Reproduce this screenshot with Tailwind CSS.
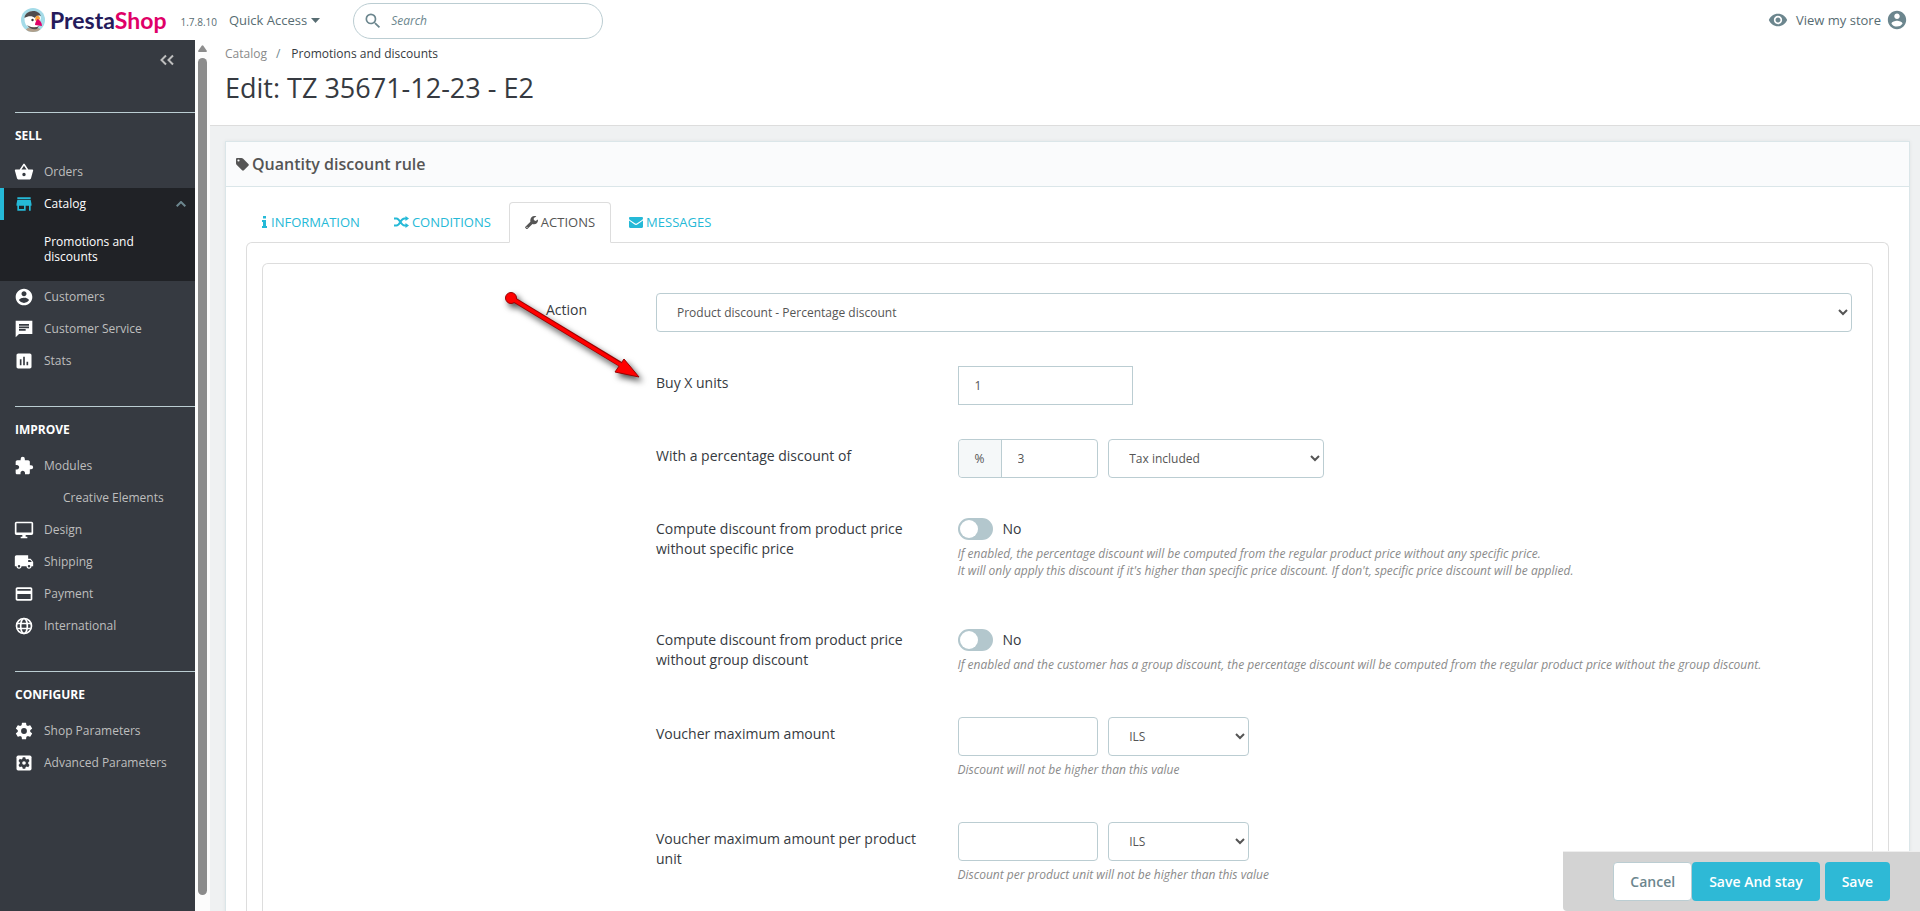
<!DOCTYPE html>
<html lang="en">
<head>
<meta charset="utf-8">
<meta name="viewport" content="width=device-width, initial-scale=1">
<title>Promotions and discounts • PrestaShop</title>
<script src="https://cdn.jsdelivr.net/npm/@tailwindcss/browser@4"></script>
</head>
<body class="flex h-screen flex-col overflow-hidden bg-[#eff1f2] font-['Open_Sans',sans-serif] text-sm text-[#363a41]">

<header class="flex h-10 shrink-0 items-center bg-white pr-3">
  <a href="#" class="ml-5 flex items-center gap-1" aria-label="PrestaShop">
    <svg class="size-[26px]" viewBox="0 0 26 26" aria-hidden="true">
      <defs><clipPath id="badge"><circle cx="13" cy="13" r="12"/></clipPath></defs>
      <g clip-path="url(#badge)">
        <rect width="26" height="26" fill="#a4dbe8"/>
        <path d="M5 26c0-4 3-6 8-6s9 2 9 6z" fill="#b1a08c"/>
        <path d="M4.500 12c0-5 4-8 8.500-8 4 0 7 3 8 7l-3 9H9c-3-1-4.500-4-4.500-8z" fill="#fff"/>
        <path d="M4.500 11c0-4 4-7 8.500-7 4 0 7 2 8 5-3-1-5 0-6 2-3-2.500-7-2-10.500 0z" fill="#4f4c4d"/>
        <path d="M7 18c4 3 9 3 12 1l-2 3c-4 1-7 0-10-4z" fill="#4f4c4d"/>
        <circle cx="12.500" cy="13" r="1.200" fill="#333"/>
        <path d="M16 9c2-1 4 0 4 3l-3 3-2-2z" fill="#f9a13a"/>
        <path d="M17.500 12c2.500 1 4.500 4 4.500 7l-7-1c0-2 1-4 2.500-6z" fill="#df0067"/>
      </g>
    </svg>
    <span class="font-['Lato',sans-serif] text-[23px] leading-6 font-bold text-[#251b5b]">Presta<span class="text-[#df0067]">Shop</span></span>
  </a>
  <span class="ml-[14px] mt-1 text-[10px] text-[#576c72]">1.7.8.10</span>
  <button type="button" class="ml-3 flex items-center gap-1 text-[13px] text-[#576c72]">Quick Access
    <svg class="h-[5px] w-[9px]" viewBox="0 0 9 5" fill="currentColor"><path d="M0 0h9L4.500 5z"/></svg>
  </button>
  <form class="ml-[33px] mt-[2px] flex h-9 w-[250px] items-center gap-2 rounded-full border border-[#bbcdd2] pl-[9px]" role="search">
    <svg class="size-5 fill-[#6c868e]" viewBox="0 0 24 24"><path d="M15.500 14h-.79l-.28-.27A6.470 6.470 0 0 0 16 9.500 6.500 6.500 0 1 0 9.500 16c1.610 0 3.090-.59 4.230-1.570l.27.28v.79l5 4.990L20.490 19l-4.990-5zm-6 0C7.010 14 5 11.990 5 9.500S7.010 5 9.500 5 14 7.010 14 9.500 11.990 14 9.500 14z"/></svg>
    <input type="text" aria-label="Search" placeholder="Search" class="w-40 text-xs italic outline-none placeholder:text-[#6c868e]">
  </form>
  <a href="#" class="ml-auto flex items-center gap-2 text-[13px] text-[#576c72]">
    <svg class="size-5 fill-[#6c868e]" viewBox="0 0 24 24"><path d="M12 4.500C7 4.500 2.730 7.610 1 12c1.730 4.390 6 7.500 11 7.500s9.270-3.110 11-7.500c-1.730-4.390-6-7.500-11-7.500zM12 17c-2.760 0-5-2.240-5-5s2.240-5 5-5 5 2.240 5 5-2.240 5-5 5zm0-8c-1.660 0-3 1.340-3 3s1.340 3 3 3 3-1.340 3-3-1.340-3-3-3z"/></svg>
    View my store</a>
  <button type="button" class="ml-[5px]" aria-label="Account"><svg class="size-[22px] fill-[#6c868e]" viewBox="0 0 24 24"><path d="M12 2C6.480 2 2 6.480 2 12s4.480 10 10 10 10-4.480 10-10S17.520 2 12 2zm0 3c1.660 0 3 1.340 3 3s-1.340 3-3 3-3-1.340-3-3 1.340-3 3-3zm0 14.200a7.200 7.200 0 0 1-6-3.220c.03-1.990 4-3.080 6-3.080 1.990 0 5.970 1.090 6 3.080a7.200 7.200 0 0 1-6 3.220z"/></svg></button>
</header>

<div class="flex min-h-0 flex-1">
  <nav class="w-[195px] shrink-0 overflow-hidden bg-[#363a41] text-xs text-[#bebebe]" aria-label="Main menu">
    <div class="flex h-[72px] justify-end pt-2 pr-4">
      <button type="button" class="size-6" aria-label="Collapse menu"><svg class="size-6 fill-none stroke-[#bebebe] stroke-2" viewBox="0 0 24 24"><path d="M11 7.500 6.500 12l4.500 4.500M18 7.500 13.500 12l4.500 4.500"/></svg></button>
    </div>

    <section class="pb-[29px]">
      <h2 class="ml-[15px] border-t border-[#bbcdd2] pt-[15px] pb-3 leading-4 font-bold text-white">SELL</h2>
      <a href="#" class="flex h-8 items-center gap-[10px] pl-[14px]"><svg class="size-5 fill-white" viewBox="0 0 24 24"><path d="m17.210 9-4.380-6.560a1 1 0 0 0-1.660.01L6.790 9H2c-.55 0-1 .45-1 1 0 .09.010.18.040.27l2.540 9.270c.23.840 1 1.460 1.920 1.460h13c.92 0 1.690-.62 1.930-1.460l2.540-9.270L23 10c0-.55-.45-1-1-1h-4.790zM9 9l3-4.400L15 9H9zm3 8c-1.100 0-2-.9-2-2s.9-2 2-2 2 .9 2 2-.9 2-2 2z"/></svg>Orders</a>
      <div class="bg-[#202226] text-white">
        <a href="#" class="flex h-8 items-center gap-[10px] border-l-4 border-[#25b9d7] pr-[9px] pl-[10px]"><svg class="size-5 fill-[#25b9d7]" viewBox="0 0 24 24"><path d="M20 4H4v2h16V4zm1 10v-2l-1-5H4l-1 5v2h1v6h10v-6h4v6h2v-6h1zm-9 4H6v-4h6v4z"/></svg>Catalog
          <svg class="ml-auto h-[6px] w-[10px] fill-none stroke-[#6c868e] stroke-2" viewBox="0 0 10 6"><path d="M0.700 5.300 5 1l4.300 4.300"/></svg></a>
        <a href="#" class="block pt-[14px] pr-10 pb-[17px] pl-11 leading-[15px]">Promotions and discounts</a>
      </div>
      <a href="#" class="flex h-8 items-center gap-[10px] pl-[14px]"><svg class="size-5 fill-white" viewBox="0 0 24 24"><path d="M12 2C6.480 2 2 6.480 2 12s4.480 10 10 10 10-4.480 10-10S17.520 2 12 2zm0 3c1.660 0 3 1.340 3 3s-1.340 3-3 3-3-1.340-3-3 1.340-3 3-3zm0 14.200a7.200 7.200 0 0 1-6-3.220c.03-1.990 4-3.080 6-3.080 1.990 0 5.970 1.090 6 3.080a7.200 7.200 0 0 1-6 3.220z"/></svg>Customers</a>
      <a href="#" class="flex h-8 items-center gap-[10px] pl-[14px]"><svg class="size-5 fill-white" viewBox="0 0 24 24"><path d="M22 2H2.010L2 22l4-4h16V2zM6 9h12v2H6V9zm8 5H6v-2h8v2zm4-6H6V6h12v2z"/></svg>Customer Service</a>
      <a href="#" class="flex h-8 items-center gap-[10px] pl-[14px]"><svg class="size-5 fill-white" viewBox="0 0 24 24"><path d="M19 3H5c-1.100 0-2 .9-2 2v14c0 1.100.9 2 2 2h14c1.100 0 2-.9 2-2V5c0-1.100-.9-2-2-2zM9 17H7v-7h2v7zm4 0h-2V7h2v10zm4 0h-2v-4h2v4z"/></svg>Stats</a>
    </section>

    <section class="pb-[29px]">
      <h2 class="ml-[15px] border-t border-[#bbcdd2] pt-[15px] pb-3 leading-4 font-bold text-white">IMPROVE</h2>
      <a href="#" class="flex h-8 items-center gap-[10px] pl-[14px]"><svg class="size-5 fill-white" viewBox="0 0 24 24"><path d="M20.500 11H19V7c0-1.100-.9-2-2-2h-4V3.500a2.500 2.500 0 0 0-5 0V5H4c-1.100 0-1.990.9-1.990 2v3.800H3.500c1.490 0 2.700 1.210 2.700 2.700s-1.210 2.700-2.700 2.700H2V20c0 1.100.9 2 2 2h3.800v-1.500c0-1.490 1.210-2.700 2.700-2.700s2.700 1.210 2.700 2.700V22H17c1.100 0 2-.9 2-2v-4h1.500a2.500 2.500 0 0 0 0-5z"/></svg>Modules</a>
      <a href="#" class="flex h-8 items-center pl-[63px]">Creative Elements</a>
      <a href="#" class="flex h-8 items-center gap-[10px] pl-[14px]"><svg class="size-5 fill-white" viewBox="0 0 24 24"><path d="M21 2H3c-1.100 0-2 .9-2 2v12c0 1.100.9 2 2 2h7v2H8v2h8v-2h-2v-2h7c1.100 0 2-.9 2-2V4c0-1.100-.9-2-2-2zm0 13H3V4h18v11z"/></svg>Design</a>
      <a href="#" class="flex h-8 items-center gap-[10px] pl-[14px]"><svg class="size-5 fill-white" viewBox="0 0 24 24"><path d="M20 8h-3V4H3c-1.100 0-2 .9-2 2v11h2c0 1.660 1.340 3 3 3s3-1.340 3-3h6c0 1.660 1.340 3 3 3s3-1.340 3-3h2v-5l-3-4zM6 18.500a1.500 1.500 0 1 1 0-3 1.500 1.500 0 0 1 0 3zm13.500-9 1.960 2.500H17V9.500h2.500zm-1.500 9a1.500 1.500 0 1 1 0-3 1.500 1.500 0 0 1 0 3z"/></svg>Shipping</a>
      <a href="#" class="flex h-8 items-center gap-[10px] pl-[14px]"><svg class="size-5 fill-white" viewBox="0 0 24 24"><path d="M20 4H4c-1.110 0-1.990.89-1.990 2L2 18c0 1.110.89 2 2 2h16c1.110 0 2-.89 2-2V6c0-1.110-.89-2-2-2zm0 14H4v-6h16v6zm0-10H4V6h16v2z"/></svg>Payment</a>
      <a href="#" class="flex h-8 items-center gap-[10px] pl-[14px]"><svg class="size-5 fill-none stroke-white stroke-2" viewBox="0 0 24 24"><circle cx="12" cy="12" r="9"/><ellipse cx="12" cy="12" rx="4" ry="9"/><path d="M4 9h16M4 15h16"/></svg>International</a>
    </section>

    <section>
      <h2 class="ml-[15px] border-t border-[#bbcdd2] pt-[15px] pb-3 leading-4 font-bold text-white">CONFIGURE</h2>
      <a href="#" class="flex h-8 items-center gap-[10px] pl-[14px]"><svg class="size-5 fill-white" viewBox="0 0 24 24"><path d="M19.430 12.980c.04-.32.070-.64.070-.98s-.03-.66-.07-.98l2.110-1.650a.5.5 0 0 0 .12-.64l-2-3.460a.5.5 0 0 0-.61-.22l-2.490 1c-.52-.4-1.080-.73-1.690-.98l-.38-2.650A.49.490 0 0 0 14 2h-4a.49.490 0 0 0-.49.420l-.38 2.650c-.61.250-1.170.590-1.690.98l-2.490-1a.49.490 0 0 0-.61.220l-2 3.460a.49.490 0 0 0 .12.640l2.110 1.650c-.04.320-.07.650-.07.980s.03.660.07.980l-2.110 1.650a.5.500 0 0 0-.12.640l2 3.460c.12.220.39.300.61.220l2.490-1c.52.400 1.080.730 1.690.98l.38 2.650c.03.240.24.420.49.420h4c.25 0 .46-.18.49-.42l.38-2.650c.61-.25 1.170-.59 1.690-.98l2.490 1c.23.090.49 0 .61-.22l2-3.460a.5.500 0 0 0-.12-.64l-2.110-1.650zM12 15.500a3.500 3.500 0 1 1 0-7 3.500 3.500 0 0 1 0 7z"/></svg>Shop Parameters</a>
      <a href="#" class="flex h-8 items-center gap-[10px] pl-[14px]"><svg class="size-5" viewBox="0 0 24 24"><rect x="3" y="3" width="18" height="18" rx="2" fill="#fff"/><path fill="#363a41" fill-rule="evenodd" d="M10.500 5h3l.4 1.900 1.300.8 1.900-.7 1.500 2.600-1.500 1.400v2l1.500 1.400-1.500 2.600-1.900-.7-1.300.8-.4 1.900h-3l-.4-1.900-1.300-.8-1.900.7-1.500-2.600L6.900 13v-2L5.400 9.600 6.900 7l1.900.7 1.300-.8zM12 9.800a2.200 2.200 0 1 0 0 4.400 2.200 2.200 0 0 0 0-4.400z"/></svg>Advanced Parameters</a>
    </section>
  </nav>

  <!-- menu scroll track -->
  <div class="flex w-[15px] shrink-0 flex-col items-center bg-[#fcfcfc] pt-[5px] pb-4" aria-hidden="true">
    <svg class="h-[7px] w-[9px] fill-[#8b8b8b]" viewBox="0 0 9 7"><path d="M3.700.8a1 1 0 0 1 1.600 0L8.800 5.800Q9.200 7 8 7H1Q-.2 7 .2 5.800z"/></svg>
    <div class="mt-[6px] w-[9px] flex-1 rounded-full bg-[#8b8b8b]"></div>
  </div>

  <main class="flex min-w-0 flex-1 flex-col">
    <div class="h-[86px] shrink-0 border-b border-[#dddddd] bg-white pl-[15px]">
      <nav class="flex pt-[6px] text-xs leading-4" aria-label="Breadcrumb">
        <a href="#" class="text-[#8a8a8a]">Catalog</a><span class="mr-[11px] ml-[9px] text-[#6c868e]">/</span><span>Promotions and discounts</span>
      </nav>
      <h1 class="mt-[10px] text-[27px] leading-8">Edit: TZ 35671-12-23 - E2</h1>
    </div>

    <div class="min-h-0 flex-1 overflow-hidden pt-[15px] pr-[10px] pl-[15px]">
      <section class="min-h-full border border-[#dbe6e9] bg-white shadow-[0_0_4px_rgba(0,0,0,0.06)]">
        <h2 class="flex h-[45px] items-center gap-[3px] border-b border-[#dbe6e9] bg-[#fafbfc] pl-[10px] text-base font-semibold text-[#555]">
          <svg class="size-[13px] fill-[#555]" viewBox="0 0 13 13"><path fill-rule="evenodd" d="M0 1.200C0 .5.500 0 1.200 0h4.200c.6 0 1.300.3 1.800.8l5.200 5.200c.6.600.6 1.200 0 1.800l-4.500 4.500c-.6.600-1.200.6-1.800 0L.8 7.100C.3 6.600 0 5.900 0 5.300zM2.500 1.400a1.100 1.100 0 1 0 0 2.200 1.100 1.100 0 0 0 0-2.200z"/></svg>
          Quantity discount rule</h2>
        <div class="px-5 pt-[15px]">
          <div class="relative z-10 -mb-px flex gap-[2px] text-[13px] leading-5 text-[#25b9d7]" role="tablist">
            <a href="#" role="tab" class="flex h-[41px] items-center gap-1 border border-transparent px-[15px] pb-px"><svg class="h-3 w-[5px]" viewBox="0 0 5 12" fill="currentColor"><path d="M1 0h3v2.500H1zM0 4h4v6h1v2H0v-2h1V6H0z"/></svg>INFORMATION</a>
            <a href="#" role="tab" class="flex h-[41px] items-center gap-[3px] border border-transparent px-[15px] pb-px"><svg class="h-3 w-[15px]" viewBox="0 0 15 12"><path d="M0 2.500h2.500c3.500 0 4 7 8 7H12M0 9.500h2.500c3.500 0 4-7 8-7H12" fill="none" stroke="currentColor" stroke-width="2"/><path d="M11.500 0 15 2.500 11.500 5zM11.500 7 15 9.500 11.500 12z" fill="currentColor"/></svg>CONDITIONS</a>
            <a href="#" role="tab" aria-selected="true" class="flex h-[41px] items-center gap-[3px] rounded-t border border-[#dddddd] border-b-white bg-white px-[15px] pb-px text-[#555]"><svg class="size-[13px]" viewBox="0 0 13 13" fill="currentColor"><path fill-rule="evenodd" d="m.4 10.700 5-5C4.700 2.600 6.700 0 9.500 0c.7 0 1.300.1 1.900.4L8.800 2v2l1.800 1 2.300-1.400c.5 2.700-1.600 4.800-4 4.700-.5 0-1-.1-1.400-.3l-4.900 4.700c-.5.500-1 .4-1.500 0l-.6-.6c-.5-.5-.6-1-.1-1.400zM2 10.700a.6.600 0 1 0 0 1.200.6.600 0 0 0 0-1.200z"/></svg>ACTIONS</a>
            <a href="#" role="tab" class="flex h-[41px] items-center gap-[3px] border border-transparent px-[15px] pb-px"><svg class="h-[11px] w-[14px]" viewBox="0 0 14 11" fill="currentColor"><path d="M0 1.200C0 .4.500 0 1.200 0h11.600c.7 0 1.200.4 1.200 1.200 0 .8-.5 1.300-1 1.700L8.500 6c-1.200.9-1.800.9-3 0L1 2.900C.5 2.500 0 2 0 1.200zM0 3.600l4.900 3.500c1.700 1.200 2.500 1.200 4.200 0L14 3.600v6.200c0 .7-.5 1.200-1.200 1.200H1.200C.5 11 0 10.500 0 9.800z"/></svg>MESSAGES</a>
          </div>
          <div class="rounded-t-md border border-b-0 border-[#dddddd] px-[15px] pt-5">
            <div class="grid h-[900px] grid-cols-[304fr_1196fr] content-start gap-x-[69px] rounded-t-md border border-b-0 border-[#dddddd] px-5 pt-[29px]">
              <label for="action" class="pt-[7px] text-right leading-5">Action</label>
              <div>
                <select id="action" class="mb-[34px] h-[39px] w-full rounded border border-[#bbcdd2] bg-white px-4 text-xs text-[#555]"><option>Product discount - Percentage discount</option></select>

                <div class="grid grid-cols-12 gap-x-[10px] pb-[34px]">
                  <label for="units" class="col-span-3 pt-[7px] leading-5">Buy X units</label>
                  <div class="col-span-9"><input id="units" type="text" value="1" class="h-[39px] w-[175px] border border-[#bbcdd2] px-4 text-xs text-[#555]"></div>
                </div>

                <div class="grid grid-cols-12 gap-x-[10px] pb-[34px]">
                  <label for="percent" class="col-span-3 pt-[7px] leading-5">With a percentage discount of</label>
                  <div class="col-span-9 grid grid-cols-12 gap-x-[10px]">
                    <div class="col-span-2 flex h-[39px] rounded border border-[#bbcdd2] text-xs text-[#555]">
                      <span class="flex w-[43px] shrink-0 items-center justify-center rounded-l border-r border-[#bbcdd2] bg-[#f5f8f9]">%</span>
                      <input id="percent" type="text" value="3" class="min-w-0 flex-1 rounded-r px-4">
                    </div>
                    <select aria-label="Tax" class="col-span-3 h-[39px] rounded border border-[#bbcdd2] bg-white px-4 text-xs text-[#555]"><option>Tax included</option></select>
                  </div>
                </div>

                <div class="grid grid-cols-12 gap-x-[10px] pb-11">
                  <label for="nospecific" class="col-span-3 pt-[7px] pr-4 leading-5">Compute discount from product price without specific price</label>
                  <div class="col-span-9 pt-[6px]">
                    <div class="flex h-[22px] items-center gap-[10px]">
                      <input id="nospecific" type="checkbox" role="switch" class="h-[22px] w-[35px] appearance-none rounded-full border-2 border-[#b3c7cd] bg-[#b3c7cd] before:block before:size-[18px] before:rounded-full before:bg-white checked:bg-[#25b9d7] checked:before:ml-[13px]"><span>No</span>
                    </div>
                    <p class="mt-[5px] text-xs leading-[17px] text-[#8a8a8a] italic">If enabled, the percentage discount will be computed from the regular product price without any specific price.<br>It will only apply this discount if it's higher than specific price discount. If don't, specific price discount will be applied.</p>
                  </div>
                </div>

                <div class="grid grid-cols-12 gap-x-[10px] pb-11">
                  <label for="nogroup" class="col-span-3 pt-[7px] pr-4 leading-5">Compute discount from product price without group discount</label>
                  <div class="col-span-9 pt-[6px]">
                    <div class="flex h-[22px] items-center gap-[10px]">
                      <input id="nogroup" type="checkbox" role="switch" class="h-[22px] w-[35px] appearance-none rounded-full border-2 border-[#b3c7cd] bg-[#b3c7cd] before:block before:size-[18px] before:rounded-full before:bg-white checked:bg-[#25b9d7] checked:before:ml-[13px]"><span>No</span>
                    </div>
                    <p class="mt-[5px] text-xs leading-[17px] text-[#8a8a8a] italic">If enabled and the customer has a group discount, the percentage discount will be computed from the regular product price without the group discount.</p>
                  </div>
                </div>

                <div class="grid grid-cols-12 gap-x-[10px] pb-11">
                  <label for="max" class="col-span-3 pt-[7px] leading-5">Voucher maximum amount</label>
                  <div class="col-span-9">
                    <div class="grid grid-cols-12 gap-x-[10px]">
                      <input id="max" type="text" class="col-span-2 h-[39px] min-w-0 rounded border border-[#bbcdd2] px-4 text-xs">
                      <select aria-label="Currency" class="col-span-2 h-[39px] min-w-0 rounded border border-[#bbcdd2] bg-white px-4 text-xs text-[#555]"><option>ILS</option></select>
                    </div>
                    <p class="mt-[5px] text-xs leading-[17px] text-[#8a8a8a] italic">Discount will not be higher than this value</p>
                  </div>
                </div>

                <div class="grid grid-cols-12 gap-x-[10px] pb-11">
                  <label for="maxunit" class="col-span-3 pt-[7px] pr-4 leading-5">Voucher maximum amount per product unit</label>
                  <div class="col-span-9">
                    <div class="grid grid-cols-12 gap-x-[10px]">
                      <input id="maxunit" type="text" class="col-span-2 h-[39px] min-w-0 rounded border border-[#bbcdd2] px-4 text-xs">
                      <select aria-label="Currency per unit" class="col-span-2 h-[39px] min-w-0 rounded border border-[#bbcdd2] bg-white px-4 text-xs text-[#555]"><option>ILS</option></select>
                    </div>
                    <p class="mt-[5px] text-xs leading-[17px] text-[#8a8a8a] italic">Discount per product unit will not be higher than this value</p>
                  </div>
                </div>
              </div>
            </div>
          </div>
        </div>
      </section>
    </div>
  </main>
</div>

<!-- sticky action bar -->
<div class="fixed right-0 bottom-0 z-20 flex h-[60px] items-center rounded-bl border-t border-[#eeeeee] bg-[#d3d3d3] pr-[30px] pl-[50px] font-semibold">
  <button type="button" class="h-[39px] rounded border border-[#bbcdd2] bg-white px-4 text-[#6c868e]">Cancel</button>
  <button type="submit" class="h-[39px] rounded bg-[#2eb9d6] px-[17px] text-white">Save And stay</button>
  <button type="submit" class="ml-[5px] h-[39px] rounded bg-[#2eb9d6] px-[17px] text-white">Save</button>
</div>

<!-- annotation arrow pointing at the units field -->
<svg class="pointer-events-none absolute top-[285px] left-[500px] z-30 h-[110px] w-[150px] drop-shadow-[3px_4px_3px_rgba(0,0,0,0.7)]" viewBox="0 0 150 110" aria-hidden="true">
  <path d="M11 13 120 79" stroke="#900" stroke-width="5.500"/>
  <path d="M124 74 139 92 115 87z" fill="#f00" stroke="#900" stroke-width="1"/>
  <circle cx="11" cy="13" r="5.500" fill="#f00" stroke="#900"/>
  <path d="M11 13 121 80" stroke="#f00" stroke-width="3.500"/>
</svg>
</body>
</html>
